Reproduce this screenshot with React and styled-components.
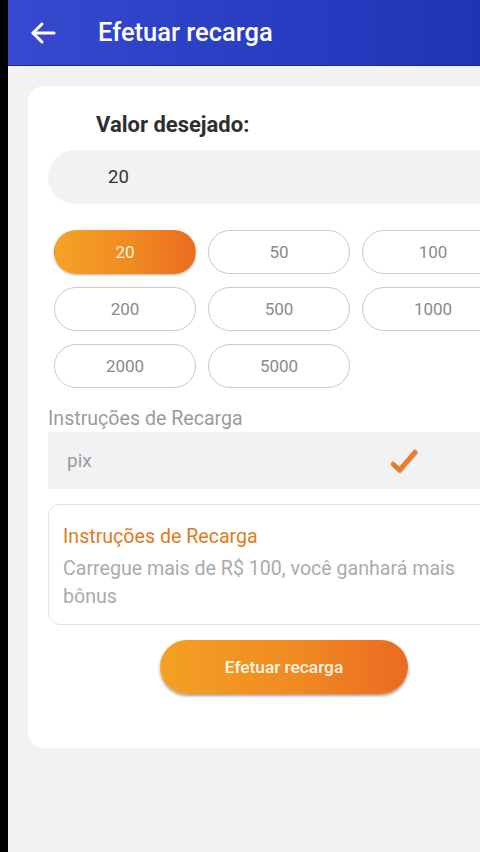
import React, { useState } from "react";
import styled, { createGlobalStyle } from "styled-components";

const Global = createGlobalStyle`
  html, body { margin: 0; padding: 0; background: #000; overflow: hidden; }
  body { font-family: Roboto, "Noto Sans", "Liberation Sans", sans-serif; }
  * { box-sizing: border-box; }
`;

const Page = styled.div`
  margin-left: 8px;
  width: 540px;
  min-height: 852px;
  background: #f2f2f4;
  display: flex;
  flex-direction: column;
`;

const Header = styled.header`
  height: 66px;
  display: flex;
  align-items: center;
  padding-left: 21px;
  gap: 41px;
  background: linear-gradient(90deg, #3649cf 0%, #2a3ec4 45%, #1d30b2 100%);
  border-bottom: 1px solid #1a2a8e;
`;

const BackButton = styled.button`
  border: 0;
  background: none;
  padding: 0;
  width: 28px;
  height: 28px;
  display: flex;
  align-items: center;
  justify-content: center;
  cursor: pointer;
`;

const Title = styled.h1`
  margin: 0 0 1px;
  color: #fff;
  font-size: 25.5px;
  font-weight: 500;
`;

const Card = styled.section`
  margin: 20px 0 0 20px;
  width: 512px;
  background: #fff;
  border-radius: 16px;
  padding: 25px 20px 54px;
  display: flex;
  flex-direction: column;
`;

const FieldTitle = styled.h2`
  margin: 0 0 11px 48px;
  font-size: 22px;
  line-height: 28px;
  font-weight: 700;
  color: #2e2e2e;
`;

const AmountInput = styled.div`
  height: 54px;
  background: #f2f2f4;
  border-radius: 27px 0 0 27px;
  display: flex;
  align-items: center;
  padding-left: 60px;
  font-size: 18.5px;
  color: #333;
`;

const Grid = styled.div`
  margin: 26px 6px 0;
  display: grid;
  grid-template-columns: repeat(3, 142px);
  column-gap: 12px;
  row-gap: 13px;
`;

const Chip = styled.button`
  height: 44px;
  border-radius: 22px;
  font-family: inherit;
  font-size: 17px;
  cursor: pointer;
  border: 1px solid ${(p) => (p.$active ? "transparent" : "#c9c9cc")};
  background: ${(p) =>
    p.$active ? "linear-gradient(90deg, #f5a325 0%, #f08a22 55%, #ec6b21 100%)" : "#fff"};
  color: ${(p) => (p.$active ? "#fff3da" : "#8a8a8a")};
  box-shadow: ${(p) => (p.$active ? "0 1px 2px rgba(120,80,40,0.45)" : "none")};
`;

const Label = styled.div`
  margin-top: 18px;
  font-size: 19.6px;
  line-height: 26px;
  color: #9b9b9b;
`;

const MethodRow = styled.div`
  height: 57px;
  background: #f2f2f4;
  display: flex;
  align-items: center;
  padding-left: 19px;
  font-size: 19px;
  color: #9b9b9b;
`;

const MethodName = styled.span`
  width: 322px;
`;

const InfoBox = styled.div`
  margin-top: 15px;
  border: 1px solid #e3e3e6;
  border-radius: 12px;
  padding: 18px 14px 12px;
  height: 121px;
`;

const InfoTitle = styled.div`
  font-size: 19.6px;
  line-height: 28px;
  color: #e07a23;
`;

const InfoText = styled.div`
  margin-top: 4px;
  font-size: 19.6px;
  line-height: 28px;
  color: #ababab;
  width: 410px;
`;

const Submit = styled.button`
  align-self: center;
  margin-top: 15px;
  width: 248px;
  height: 54px;
  border: 0;
  border-radius: 27px;
  font-family: inherit;
  font-size: 17.3px;
  font-weight: 500;
  color: #fff6e6;
  background: linear-gradient(90deg, #f4a024 0%, #f08a22 55%, #ec6a21 100%);
  box-shadow: 0 2px 3px rgba(90, 60, 40, 0.5);
  cursor: pointer;
`;

const amounts = [20, 50, 100, 200, 500, 1000, 2000, 5000];

export default function App() {
  const [selected, setSelected] = useState(20);
  return (
    <Page>
      <Global />
      <Header>
        <BackButton aria-label="voltar">
          <svg width="26" height="24" viewBox="0 0 26 24" fill="none" stroke="#fff" strokeWidth="3" strokeLinecap="round" strokeLinejoin="round">
            <path d="M24 12H3" />
            <path d="M12 3L3 12l9 9" />
          </svg>
        </BackButton>
        <Title>Efetuar recarga</Title>
      </Header>
      <Card>
        <FieldTitle>Valor desejado:</FieldTitle>
        <AmountInput>{selected}</AmountInput>
        <Grid>
          {amounts.map((a) => (
            <Chip key={a} $active={a === selected} onClick={() => setSelected(a)}>
              {a}
            </Chip>
          ))}
        </Grid>
        <Label>Instruções de Recarga</Label>
        <MethodRow>
          <MethodName>pix</MethodName>
          <svg width="30" height="26" viewBox="0 0 30 26">
            <path d="M4 16L10.5 22L26 4" fill="none" stroke="rgba(120,70,30,0.35)" strokeWidth="4.5" strokeLinecap="round" strokeLinejoin="round" transform="translate(0.6,1)" />
            <path d="M4 16L10.5 22L26 4" fill="none" stroke="#f07a22" strokeWidth="4.5" strokeLinecap="round" strokeLinejoin="round" />
          </svg>
        </MethodRow>
        <InfoBox>
          <InfoTitle>Instruções de Recarga</InfoTitle>
          <InfoText>Carregue mais de R$ 100, você ganhará mais bônus</InfoText>
        </InfoBox>
        <Submit>Efetuar recarga</Submit>
      </Card>
    </Page>
  );
}
